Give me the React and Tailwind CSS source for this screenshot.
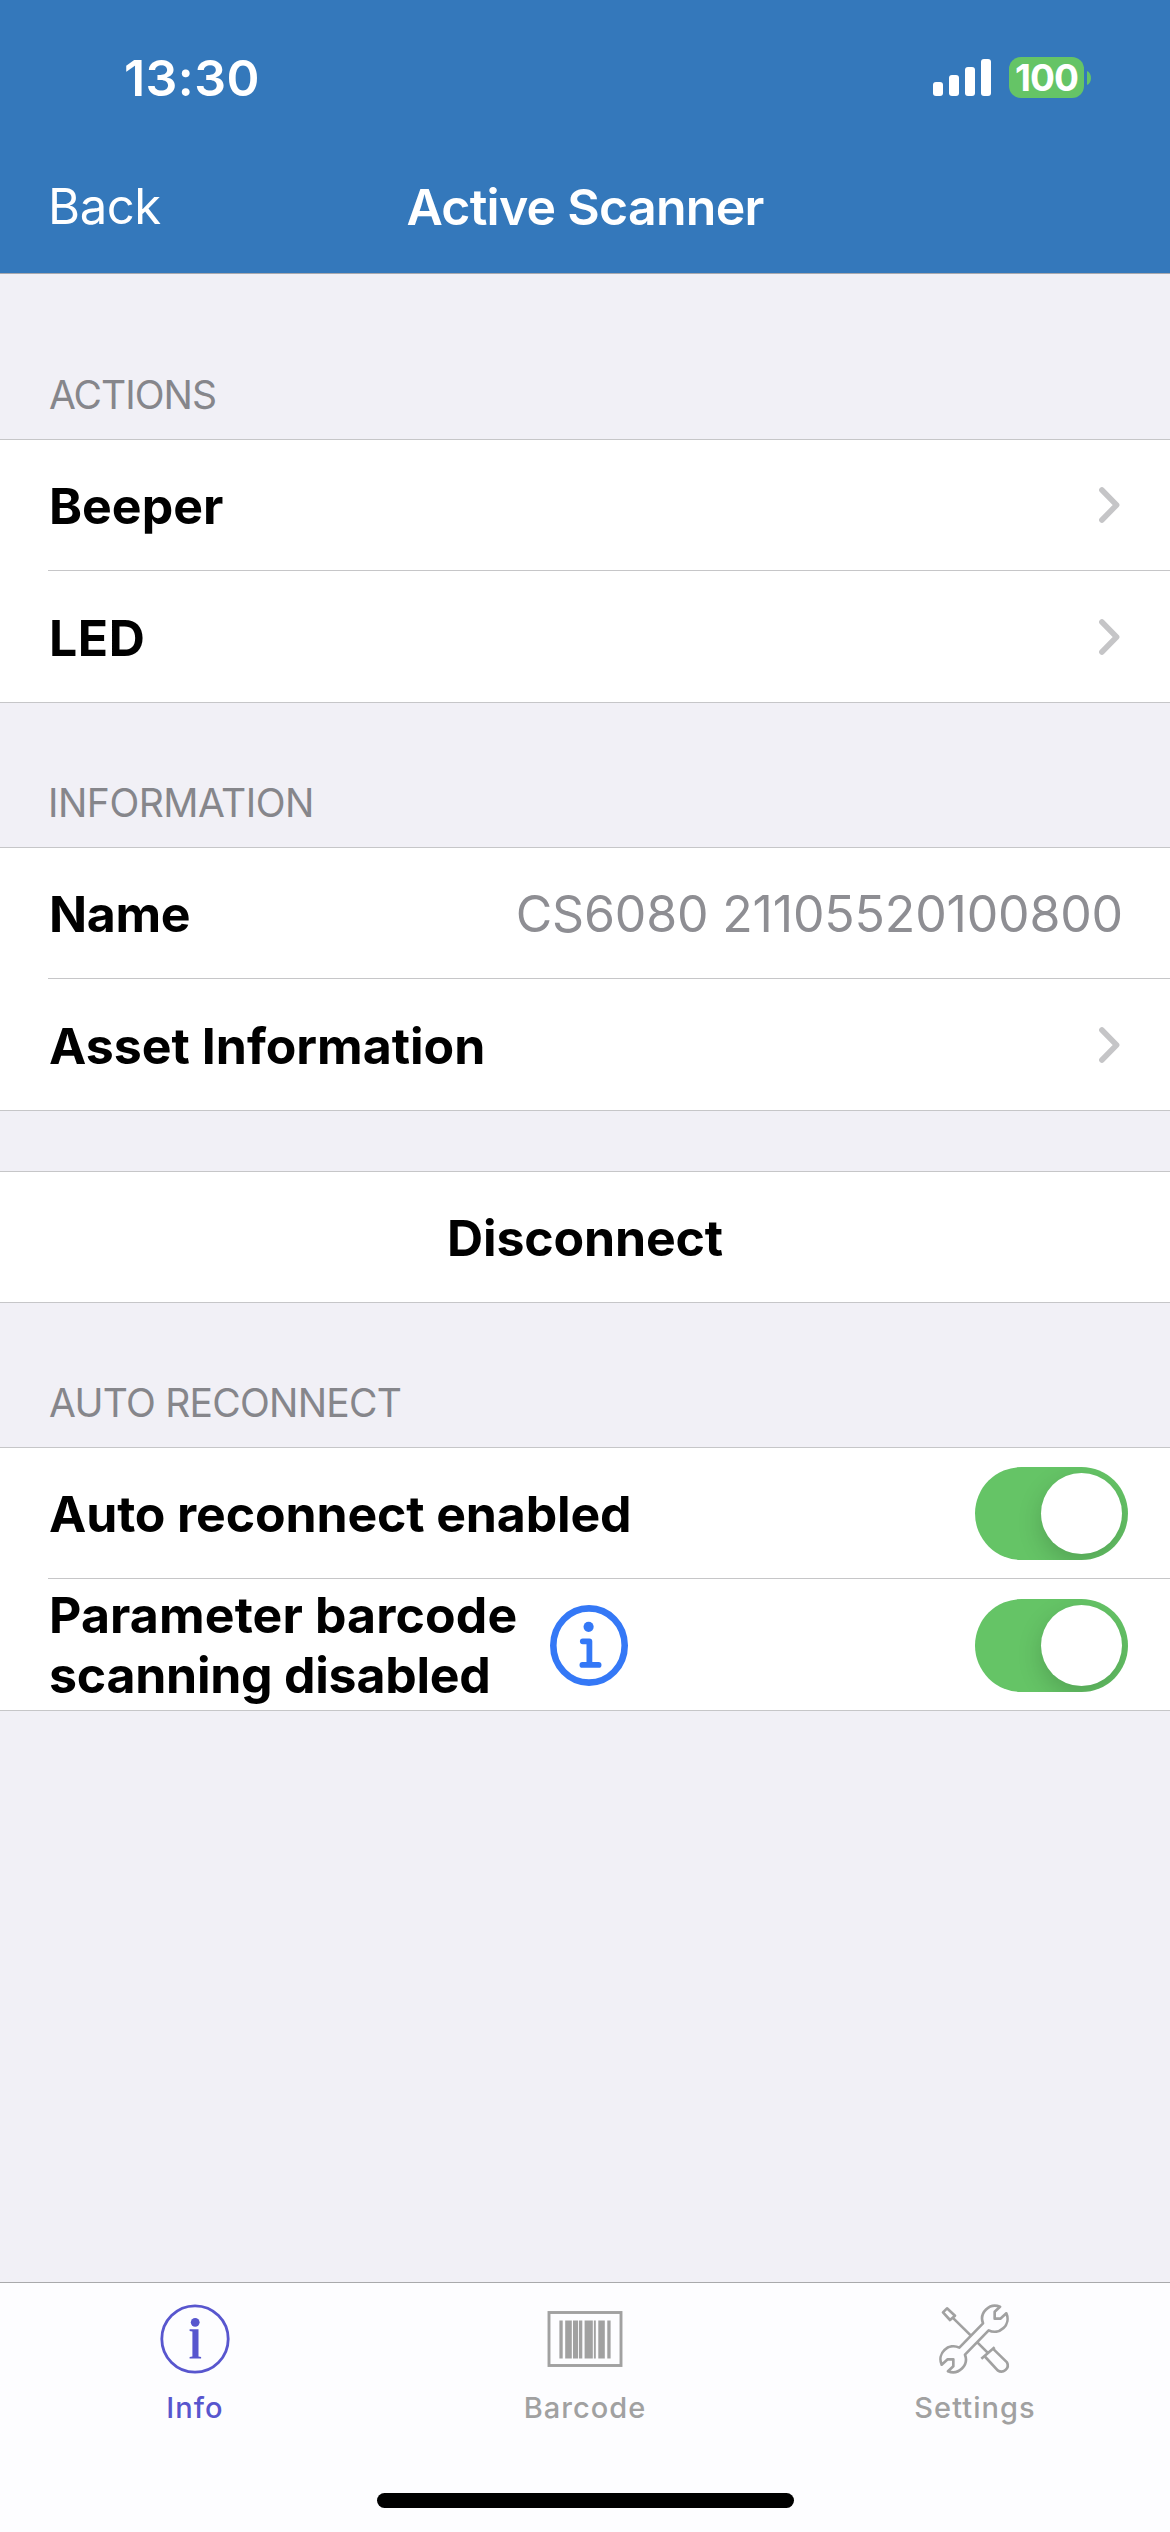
function Chevron() {
  return (
    <svg className="h-9 w-[21px] shrink-0" viewBox="0 0 21 36" fill="none" stroke="#c5c5c7" strokeWidth="5.6" strokeLinecap="round" strokeLinejoin="round">
      <path d="M2.9 3 17.6 18 2.9 33" />
    </svg>
  );
}

function Toggle({ className }) {
  return (
    <button type="button" role="switch" aria-checked="true" className={`flex h-[93px] w-[153px] shrink-0 items-center justify-end overflow-hidden rounded-full bg-[#65c466] p-[6px] ${className}`}>
      <span className="size-[81px] rounded-full bg-white shadow-[0_9px_24px_rgba(0,0,0,0.17)]" />
    </button>
  );
}

function InfoBadge() {
  return (
    <svg className="mt-[2px] h-[81px] w-[78px] shrink-0" viewBox="0 0 78 81" fill="none" stroke="#3478f6">
      <ellipse cx="39" cy="40.5" rx="35.7" ry="37.1" strokeWidth="6.6" />
      <circle cx="38.6" cy="21.8" r="5.1" fill="#3478f6" stroke="none" />
      <path d="M32.8 36.3h6.6v23.6M32.4 59.9H48.6" strokeWidth="5.8" strokeLinecap="round" strokeLinejoin="round" />
    </svg>
  );
}

function SectionTitle({ children, className }) {
  return <h2 className={`flex items-end pb-5 text-[39px] leading-[48px] text-[#86868b] ${className}`}>{children}</h2>;
}

function Group({ children }) {
  return <section className="border-y border-[#c6c6c8] bg-white">{children}</section>;
}

function Row({ label, labelClass = 'pt-[2px]', last, extra, children }) {
  return (
    <div className="pl-12">
      <div className={`flex items-center pl-px ${last ? 'h-[131px]' : 'h-[131px] border-b border-[#c6c6c8]'}`}>
        <span className={`text-[50px] font-bold leading-[60px] text-black ${labelClass}`}>{label}</span>
        {extra}
        <div className="ml-auto flex items-center">{children}</div>
      </div>
    </div>
  );
}

function InfoIcon() {
  return (
    <svg className="size-[72px]" viewBox="0 0 72 72" fill="currentColor">
      <circle cx="36" cy="36" r="33.2" fill="none" stroke="currentColor" strokeWidth="2.8" />
      <circle cx="36.2" cy="19.3" r="4.4" />
      <path d="M30.6 26.2h8.9v27.2l2.6.5v1.7H30.6v-1.7l2.8-.5V28.6l-2.8-.6z" />
    </svg>
  );
}

function BarcodeIcon() {
  return (
    <svg className="size-[76px]" viewBox="0 0 76 76" fill="currentColor">
      <rect x="2" y="11.5" width="72" height="53" fill="none" stroke="currentColor" strokeWidth="2.9" />
      <path d="M12.4 19.5h3.3v38h-3.3zM18.2 19.5h6.6v38h-6.6zM26 19.5h5v38h-5zM31.9 19.5h3.4v38h-3.4zM37.6 19.5h8.2v38h-8.2zM46.9 19.5h1.9v38h-1.9zM51.3 19.5h6.5v38h-6.5zM60.3 19.5h3.3v38h-3.3z" />
    </svg>
  );
}

function ToolsIcon() {
  return (
    <svg className="size-[72px]" viewBox="174 129 216 216" fill="none" stroke="currentColor" strokeWidth="8" strokeLinejoin="round">
      <path d="M357 140A39 39 0 0 0 306 190L235 263A39 39 0 0 0 182 314L200 298H217V319L201 334A39 39 0 0 0 252 284L323 211A39 39 0 0 0 376 160L358 176H341V155Z" />
      <path d="M198 145 186 157 207 180 222 167ZM218 176 269 226M289 247 322 280M301 296 341 262M313 291 350 331A19 19 0 0 0 378 307L338 268" />
    </svg>
  );
}

function Tab({ label, icon, active }) {
  return (
    <div className={`flex flex-1 flex-col items-center ${active ? 'text-[#5856ce]' : 'text-[#a1a1a1]'}`}>
      <div className="flex h-[76px] items-center">{icon}</div>
      <span className="mt-[13px] text-[29px] font-medium leading-[36px] tracking-[1.05px]">{label}</span>
    </div>
  );
}

export default function App() {
  return (
    <div className="flex h-[2532px] w-[1170px] flex-col overflow-hidden bg-[#f1f0f6] font-[Inter,sans-serif]">
      <header className="h-[274px] border-b border-[#a9a9ae] bg-[#3478bb] text-white">
        <div className="flex h-[141px] items-start justify-between pl-[124px] pr-[79px]">
          <span className="mt-12 text-[50px] font-semibold leading-[60px] tracking-[0.45px]">13:30</span>
          <div className="mt-[57px] flex h-[41px] items-center">
            <svg className="mr-[18px] h-[37px] w-[58px]" viewBox="0 0 58 37" fill="white">
              <rect x="0" y="23" width="10" height="14" rx="3" />
              <rect x="16" y="16" width="10" height="21" rx="3" />
              <rect x="32" y="8" width="10" height="29" rx="3" />
              <rect x="48" y="0" width="10" height="37" rx="3" />
            </svg>
            <span className="flex h-[41px] w-[75px] items-center justify-center rounded-[12px] bg-[#65c466] text-[37px] font-bold leading-[41px] tracking-[-1px]">100</span>
            <svg className="ml-[3px] h-[14px] w-1" viewBox="0 0 4 14" fill="#65c466">
              <path d="M0 0C5.3 2 5.3 12 0 14z" />
            </svg>
          </div>
        </div>
        <nav className="grid h-[132px] grid-cols-[1fr_auto_1fr] items-center pl-12 pr-12 leading-[60px]">
          <span className="text-[49px] tracking-[-0.4px]">Back</span>
          <h1 className="text-[50px] font-semibold tracking-[-0.74px]">Active Scanner</h1>
        </nav>
      </header>

      <main className="flex-1">
        <SectionTitle className="h-[165px] pl-[49px] tracking-[-1px]">ACTIONS</SectionTitle>
        <Group>
          <Row label="Beeper"><div className="mr-[50px]"><Chevron /></div></Row>
          <Row label="LED" labelClass="pt-[2px] tracking-[0.5px]" last><div className="mr-[50px]"><Chevron /></div></Row>
        </Group>

        <SectionTitle className="h-36 pl-12 tracking-[-0.5px]">INFORMATION</SectionTitle>
        <Group>
          <Row label="Name" labelClass="pt-[2px] tracking-[-0.3px]">
            <span className="mr-[47px] pt-[2px] text-[50px] leading-[60px] tracking-[-0.16px] text-[#8e8e93]">CS6080 21105520100800</span>
          </Row>
          <Row label="Asset Information" last><div className="mr-[50px]"><Chevron /></div></Row>
        </Group>

        <div className="h-[60px]" />
        <Group>
          <button type="button" className="block h-[130px] w-full pt-px text-center text-[50px] font-bold leading-[60px] tracking-[-0.17px] text-black">Disconnect</button>
        </Group>

        <SectionTitle className="h-36 pl-[49px] tracking-[-0.75px]">AUTO RECONNECT</SectionTitle>
        <Group>
          <Row label="Auto reconnect enabled" labelClass="pt-[2px] tracking-[-0.15px]">
            <div className="mr-[42px]"><Toggle className="mt-px" /></div>
          </Row>
          <Row
            label={<><span className="tracking-[0.12px]">Parameter barcode</span> <span className="tracking-[-0.25px]">scanning disabled</span></>}
            labelClass="w-[501px]"
            last
            extra={<InfoBadge />}
          >
            <div className="mr-[42px]"><Toggle className="mt-[2px]" /></div>
          </Row>
        </Group>
      </main>

      <footer className="flex h-[250px] flex-col items-center border-t border-[#a9a9ab] bg-[#fdfdff]">
        <div className="flex w-full pt-[18px]">
          <Tab label="Info" icon={<InfoIcon />} active />
          <Tab label="Barcode" icon={<BarcodeIcon />} />
          <Tab label="Settings" icon={<ToolsIcon />} />
        </div>
        <div className="mb-[24px] mt-auto h-[15px] w-[417px] rounded-full bg-black" />
      </footer>
    </div>
  );
}
